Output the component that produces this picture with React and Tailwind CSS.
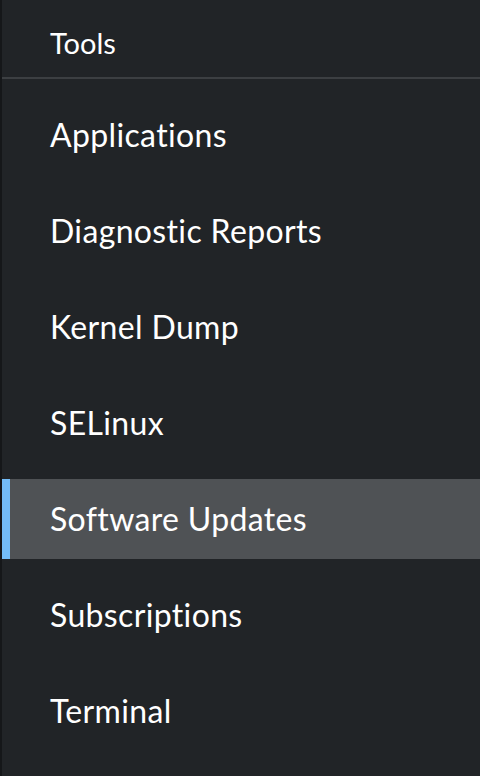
const items = [
  'Applications',
  'Diagnostic Reports',
  'Kernel Dump',
  'SELinux',
  'Software Updates',
  'Subscriptions',
  'Terminal',
];

export default function App() {
  const active = 'Software Updates';

  return (
    <div className="h-[776px] w-[480px] overflow-hidden bg-[#212427] border-l-2 border-[#151719] font-['Lato',sans-serif] text-white [font-variant-ligatures:none]">
      <div className="flex h-[77px] items-center pl-[48px] pt-2 text-[29px]">Tools</div>
      <div className="h-[2px] bg-[#3c3f42]" />
      <nav className="flex flex-col gap-4 pt-4">
        {items.map((item) => (
          <div
            key={item}
            className={
              item === active
                ? 'flex h-[80px] items-center border-l-8 border-[#73bcf7] bg-[#4f5255] pl-[40px] text-[32px] tracking-[0.35px]'
                : 'flex h-[80px] items-center pl-[48px] text-[32px] tracking-[0.35px]'
            }
          >
            {item}
          </div>
        ))}
      </nav>
    </div>
  );
}
